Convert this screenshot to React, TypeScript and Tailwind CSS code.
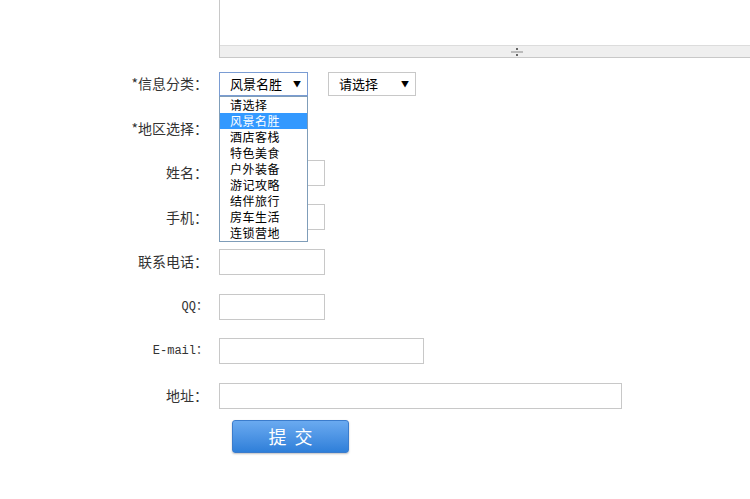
import React from "react";

const cjk = { fontFamily: '"Noto Sans CJK SC", "Liberation Sans", sans-serif' };
const mono = { fontFamily: '"Liberation Mono", "Noto Sans CJK SC", monospace' };

const categories = ["请选择", "风景名胜", "酒店客栈", "特色美食", "户外装备", "游记攻略", "结伴旅行", "房车生活", "连锁营地"];

const Row: React.FC<{ label: string; h?: string; monoLabel?: boolean; children?: React.ReactNode }> = ({ label, h = "h-[45px]", monoLabel, children }) => (
  <div className={`flex items-center ${h}`}>
    <div
      className={`w-[208px] shrink-0 text-right text-[#333] ${monoLabel ? "text-[12px]" : "text-[14px]"}`}
      style={monoLabel ? mono : cjk}
    >
      {label}
    </div>
    <div className="ml-[11px] flex items-center">{children}</div>
  </div>
);

const Input: React.FC<{ w: string }> = ({ w }) => (
  <input type="text" className={`${w} h-[26px] border border-[#c8c8c8] bg-white outline-none`} />
);

const App: React.FC = () => {
  return (
    <div className="w-[750px] h-[499px] overflow-hidden bg-white relative" style={cjk}>
      {/* textarea scrolled partly out of view */}
      <div className="ml-[219px] h-[58px] border-l border-b border-[#c8c8c8] flex flex-col">
        <div className="flex-1 bg-white" />
        <div className="h-[12px] bg-[#efefef] border-t border-[#dcdcdc] flex items-center pl-[291px]">
          <div className="flex flex-col items-center">
            <span className="w-[2px] h-[2px] bg-[#666]" />
            <span className="w-[12px] h-[2px] bg-[#bbb] my-[1px]" />
            <span className="w-[2px] h-[2px] bg-[#666]" />
          </div>
        </div>
      </div>

      <div className="mt-[3px]">
        <Row label="*信息分类：">
          <div className="relative">
            <div className="w-[89px] h-[24px] border border-[#7a9cd3] flex items-center justify-between pl-[10px] pr-[6px] text-[13px] text-black">
              <span>风景名胜</span>
              <span className="text-[8px]">▼</span>
            </div>
            <ul className="absolute left-0 top-[24px] w-[89px] border border-[#7f9db9] bg-white z-10 text-[12px] leading-[16px] text-black">
              {categories.map((c) => (
                <li key={c} className={`pl-[10px] h-[16px] tracking-[0.5px] ${c === "风景名胜" ? "bg-[#3399ff] text-white" : ""}`}>
                  {c}
                </li>
              ))}
            </ul>
          </div>
          <div className="ml-[20px] w-[88px] h-[24px] border border-[#c8c8c8] flex items-center justify-between pl-[10px] pr-[6px] text-[13px] text-black">
            <span>请选择</span>
            <span className="text-[8px]">▼</span>
          </div>
        </Row>
        <Row label="*地区选择：" h="h-[44px]" />
        <Row label="姓名：">
          <Input w="w-[106px]" />
        </Row>
        <Row label="手机：" h="h-[44px]">
          <Input w="w-[106px]" />
        </Row>
        <Row label="联系电话：">
          <Input w="w-[106px]" />
        </Row>
        <Row label="QQ：" monoLabel>
          <Input w="w-[106px]" />
        </Row>
        <Row label="E-mail：" h="h-[44px]" monoLabel>
          <Input w="w-[205px]" />
        </Row>
        <Row label="地址：">
          <Input w="w-[403px]" />
        </Row>
        <div className="mt-[2px] ml-[232px]">
          <button className="w-[117px] h-[33px] rounded-[3px] border border-[#3b7ccc] bg-gradient-to-b from-[#6aaaf0] to-[#2e7fd9] text-white text-[18px] tracking-[8px] pl-[8px] shadow-[0_1px_2px_rgba(0,0,0,0.25)]">
            提交
          </button>
        </div>
      </div>
    </div>
  );
};

export default App;
